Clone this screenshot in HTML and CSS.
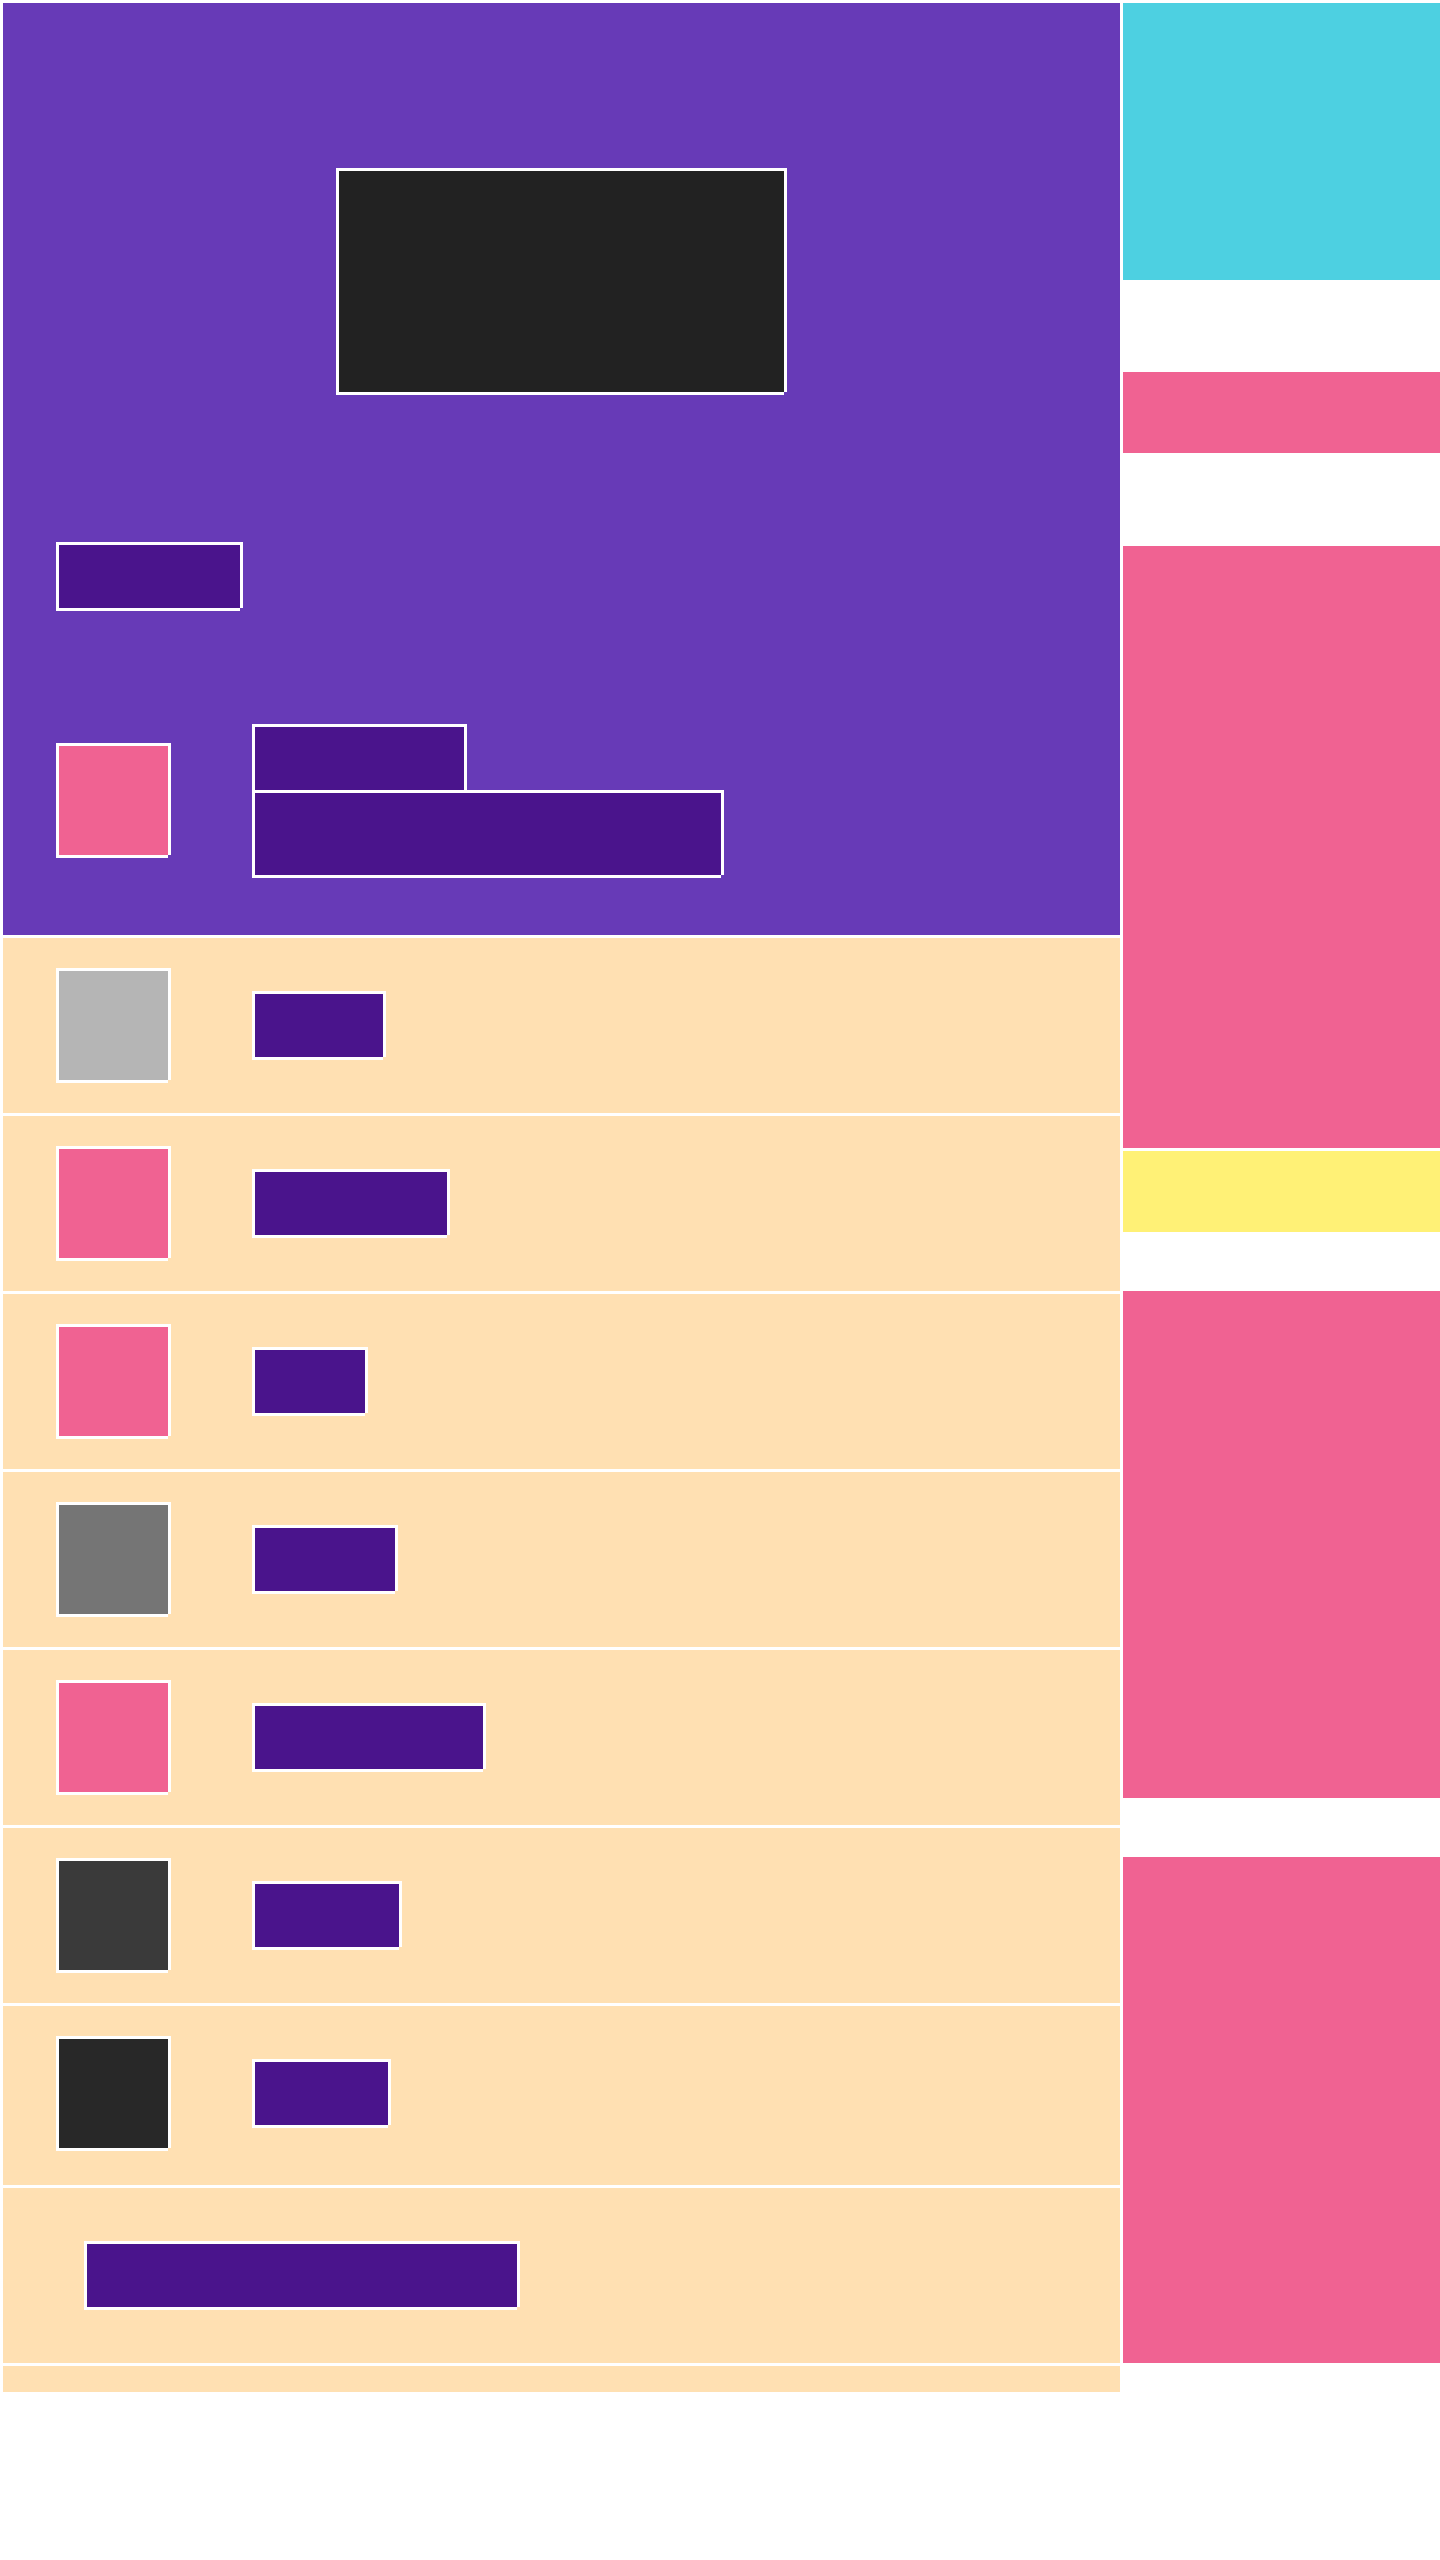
FILE: index.html
```html
<!DOCTYPE html>
<html lang="en">
<head>
<meta charset="utf-8">
<title>Layout</title>
<link rel="stylesheet" href="styles.css">
</head>
<body>
<div class="page">
  <main class="main">
    <header class="hero">
      <div class="blk hero-media"></div>
      <div class="blk bar hero-title"></div>
      <div class="hero-profile">
        <div class="blk thumb pink hero-thumb"></div>
        <div class="hero-text">
          <div class="bar-flat hero-name"></div>
          <div class="blk bar hero-sub"></div>
        </div>
      </div>
    </header>
    <div class="row">
      <div class="blk thumb grey-l"></div>
      <div class="blk bar w131"></div>
    </div>
    <div class="row">
      <div class="blk thumb pink"></div>
      <div class="blk bar w195"></div>
    </div>
    <div class="row">
      <div class="blk thumb pink"></div>
      <div class="blk bar w113"></div>
    </div>
    <div class="row">
      <div class="blk thumb grey-m"></div>
      <div class="blk bar w143"></div>
    </div>
    <div class="row">
      <div class="blk thumb pink"></div>
      <div class="blk bar w231"></div>
    </div>
    <div class="row">
      <div class="blk thumb grey-d"></div>
      <div class="blk bar w147"></div>
    </div>
    <div class="row row-tall">
      <div class="blk thumb grey-x"></div>
      <div class="blk bar w136"></div>
    </div>
    <div class="row row-footer">
      <div class="blk bar w433"></div>
    </div>
    <div class="strip"></div>
  </main>
  <aside class="side">
    <div class="side-block cyan side-top"></div>
    <div class="side-block pinkbg side-a"></div>
    <div class="side-block pinkbg side-b"></div>
    <div class="side-block yellow side-c"></div>
    <div class="side-block pinkbg side-d"></div>
    <div class="side-block pinkbg side-e"></div>
  </aside>
</div>
</body>
</html>
```

FILE: styles.css
```css
html, body {
  margin: 0;
  padding: 0;
  background: #ffffff;
  font-family: "Liberation Sans", Arial, sans-serif;
}

.page {
  display: flex;
  align-items: flex-start;
  gap: 3px;
  padding: 3px 0 0 3px;
  width: 1440px;
  box-sizing: border-box;
}

.main {
  width: 1117px;
  display: flex;
  flex-direction: column;
  gap: 3px;
}

.side {
  flex: 1;
  display: flex;
  flex-direction: column;
}

/* outlined block: white edge on top/left, offset white edges right/bottom */
.blk {
  box-sizing: border-box;
  border-top: 3px solid #ffffff;
  border-left: 3px solid #ffffff;
  box-shadow: 3px 0 0 0 #ffffff, 0 3px 0 0 #ffffff;
  margin-right: 3px;
  margin-bottom: 3px;
  flex: none;
}

.bar {
  height: 66px;
  background: #4a148c;
}

.bar-flat {
  box-sizing: border-box;
  border-top: 3px solid #ffffff;
  border-left: 3px solid #ffffff;
  box-shadow: 3px 0 0 0 #ffffff;
  background: #4a148c;
  margin-right: 3px;
}

.thumb {
  width: 112px;
  height: 112px;
}

.pink { background: #f06292; }
.grey-l { background: #b5b5b5; }
.grey-m { background: #757575; }
.grey-d { background: #3a3a3a; }
.grey-x { background: #282828; }

/* hero */
.hero {
  background: #673ab7;
  padding: 165px 53px 57px;
  display: flex;
  flex-direction: column;
  align-items: flex-start;
}

.hero-media {
  align-self: center;
  width: 448px;
  height: 224px;
  background: #222222;
}

.hero-title {
  width: 184px;
  margin-top: 147px;
}

.hero-profile {
  margin-top: 113px;
  display: flex;
  align-items: flex-start;
  gap: 81px;
}

.hero-thumb {
  margin-top: 19px;
}

.hero-text {
  display: flex;
  flex-direction: column;
  align-items: flex-start;
}

.hero-name {
  width: 212px;
  height: 66px;
}

.hero-sub {
  width: 469px;
  height: 85px;
}

/* list rows */
.row {
  background: #ffe0b2;
  height: 175px;
  box-sizing: border-box;
  padding-left: 53px;
  display: flex;
  align-items: center;
  gap: 81px;
}

.row-tall {
  height: 179px;
  padding-bottom: 4px;
}

.row-footer {
  padding-left: 81px;
}

.w113 { width: 113px; }
.w131 { width: 131px; }
.w136 { width: 136px; }
.w143 { width: 143px; }
.w147 { width: 147px; }
.w195 { width: 195px; }
.w231 { width: 231px; }
.w433 { width: 433px; }

.strip {
  background: #ffe0b2;
  height: 26px;
}

/* side column */
.side-block { width: 100%; }
.cyan { background: #4dd0e1; }
.pinkbg { background: #f06292; }
.yellow { background: #fff176; }

.side-top { height: 277px; }
.side-a { margin-top: 92px; height: 81px; }
.side-b { margin-top: 93px; height: 602px; }
.side-c { margin-top: 3px; height: 81px; }
.side-d { margin-top: 59px; height: 507px; }
.side-e { margin-top: 59px; height: 506px; }
```
